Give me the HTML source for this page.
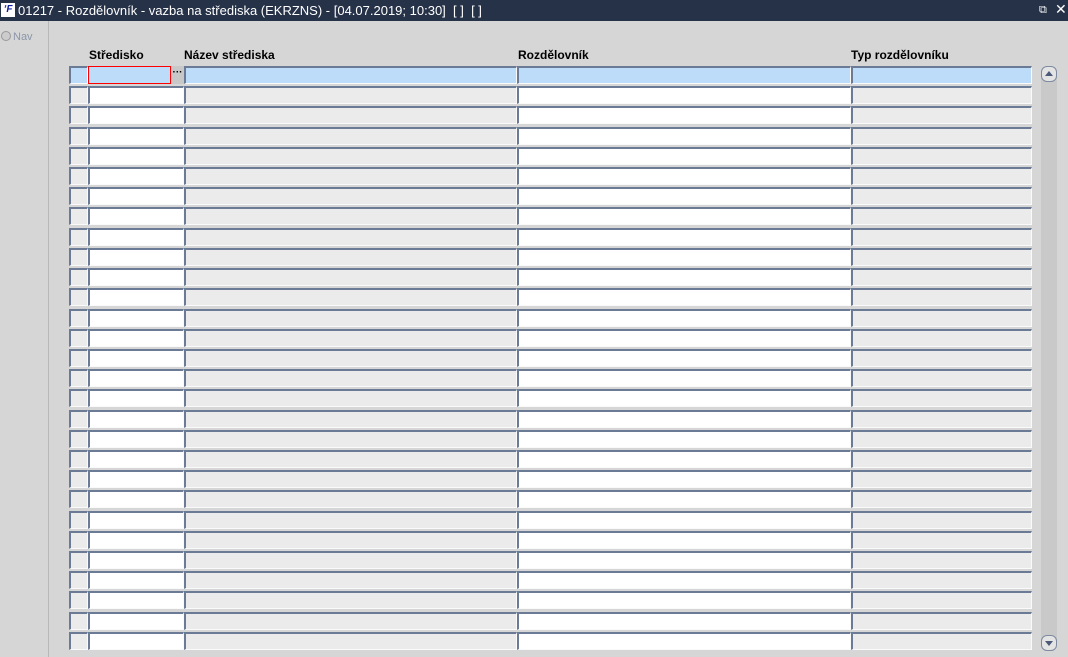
<!DOCTYPE html>
<html><head><meta charset="utf-8"><style>
html,body{margin:0;padding:0}
body{width:1068px;height:657px;background:#d6d6d6;position:relative;overflow:hidden;font-family:"Liberation Sans",sans-serif}
.title{position:absolute;left:0;top:0;width:1068px;height:21px;background:#263248;color:#fff;font-size:13px;line-height:21px}
.title .t{position:absolute;left:18px;top:0}
.logo{position:absolute;left:1px;top:3px;width:14px;height:14px;background:#fff;color:#1020a0;font-weight:bold;font-style:italic;font-size:10px;line-height:14px;text-align:center}
.left{position:absolute;left:0;top:21px;width:48px;height:636px;background:#d6d6d6;border-right:1px solid #b8b8b8}
.nav{position:absolute;left:1px;top:27px;font-size:11px;color:#8a96aa}
.nav i{display:inline-block;width:8px;height:8px;border-radius:50%;border:1px solid #999;background:#ccc;vertical-align:-1px;margin-right:2px}
.hd{position:absolute;top:48px;font-size:12px;font-weight:bold;color:#000}
.c{position:absolute;box-sizing:border-box;height:18px;border-top:2px solid #6b7b96;border-left:2px solid #6b7b96;border-right:1px solid #fafafa;border-bottom:1px solid #fafafa;background:#ebebeb}
.w{background:#fff}
.sel{background:#bcdcfa}
.sb{position:absolute;left:1041px;top:66px;width:16px;height:585px;background:#c9c9c9;border-radius:8px}
.ar{position:absolute;left:1041px;width:14px;height:14px;border:1px solid #7d8aa0;background:#e4e4e4;border-radius:6px}
</style></head><body>
<div class="title"><div class="logo">ʼF</div><span class="t">01217 - Rozdělovník - vazba na střediska (EKRZNS) - [04.07.2019; 10:30]&nbsp; [ ]&nbsp; [ ]</span>
<span style="position:absolute;left:1039px;top:0;font-size:11px">⧉</span><span style="position:absolute;left:1055px;top:-1px;font-size:14px">✕</span></div>
<div class="left"><div class="nav" style="top:10px"><i></i>Nav</div></div>
<div class="hd" style="left:89px">Středisko</div>
<div class="hd" style="left:184px">Název střediska</div>
<div class="hd" style="left:518px">Rozdělovník</div>
<div class="hd" style="left:851px">Typ rozdělovníku</div>
<div id="g"></div>
<div class="sb"></div>
<div class="ar" style="top:66px"><div style="position:absolute;left:3px;top:4px;border-left:4px solid transparent;border-right:4px solid transparent;border-bottom:5px solid #4a5a78"></div></div>
<div class="ar" style="top:635px"><div style="position:absolute;left:3px;top:5px;border-left:4px solid transparent;border-right:4px solid transparent;border-top:5px solid #4a5a78"></div></div>
<script>
var h='';
for(var i=0;i<29;i++){
 var t=Math.round(66+i*20.21);
 var s=i==0;
 h+='<div class="c'+(s?' sel':'')+'" style="left:69px;top:'+t+'px;width:19px"></div>';
 if(s){h+='<div class="c sel" style="left:88px;top:'+t+'px;width:83px;border:1px solid #f00"></div><div style="position:absolute;left:171px;top:'+t+'px;width:13px;height:18px;background:#c8c8c8;font-size:10px;font-weight:bold;text-align:center;line-height:14px">···</div>';}
 else h+='<div class="c w" style="left:88px;top:'+t+'px;width:96px"></div>';
 h+='<div class="c'+(s?' sel':'')+'" style="left:184px;top:'+t+'px;width:333px"></div>';
 h+='<div class="c '+(s?'sel':'w')+'" style="left:517px;top:'+t+'px;width:334px"></div>';
 h+='<div class="c'+(s?' sel':'')+'" style="left:851px;top:'+t+'px;width:181px"></div>';
}
document.getElementById('g').innerHTML=h;
</script>
</body></html>
